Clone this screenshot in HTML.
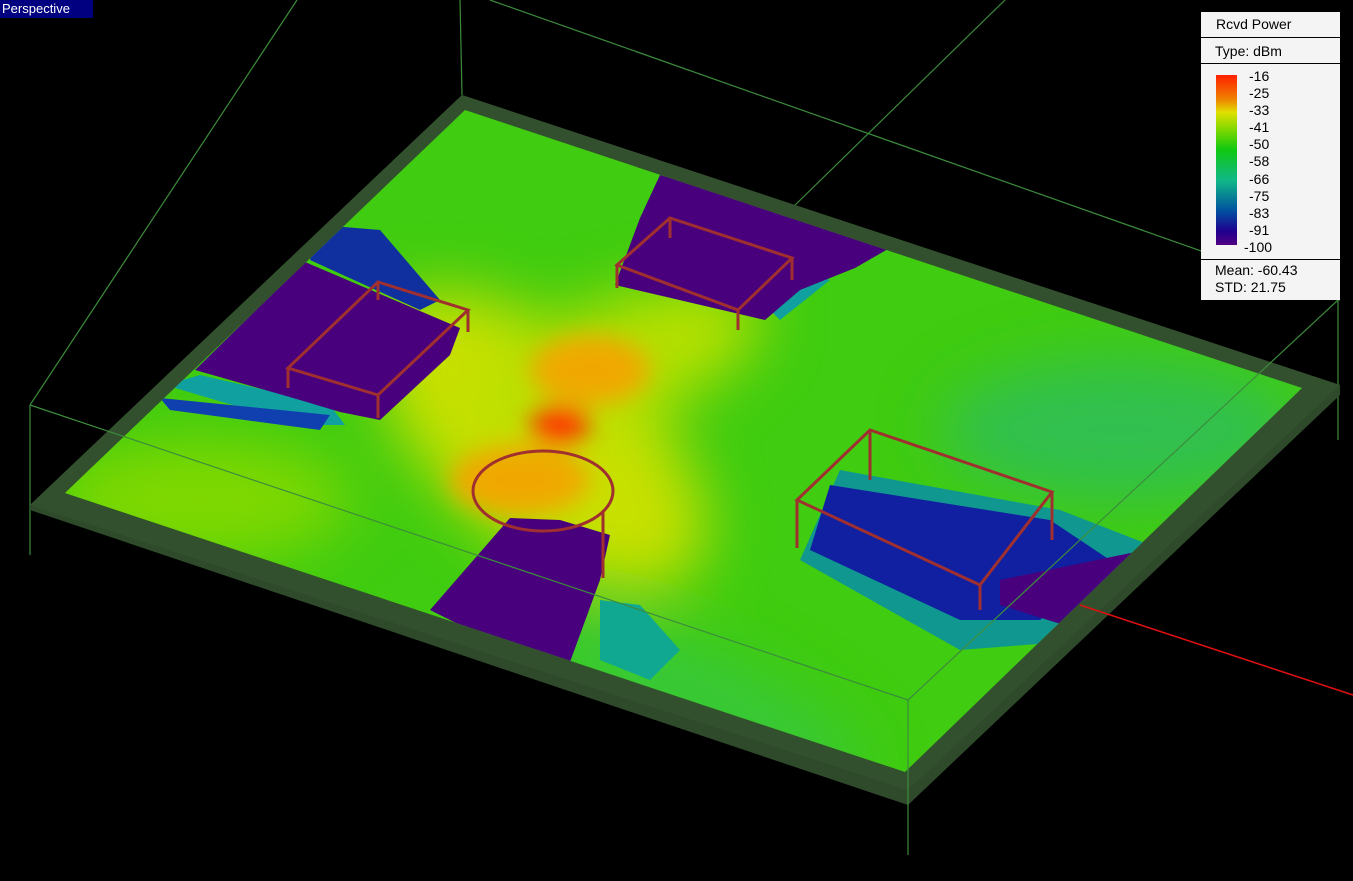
<!DOCTYPE html>
<html><head><style>
html,body{margin:0;padding:0;background:#000;overflow:hidden}
#w{position:relative;width:1353px;height:881px;background:#000}
.lg{position:absolute;left:1201px;top:12px;width:139px;height:288px;background:#f4f4f4;font-family:"Liberation Sans",sans-serif;font-size:14px;color:#000}
.lg .s{border-bottom:1px solid #000;box-sizing:border-box}
.tag{position:absolute;left:0;top:0;width:93px;height:18px;background:#000080;color:#fff;font-family:"Liberation Sans",sans-serif;font-size:13px;line-height:18px;padding-left:2px;box-sizing:border-box}
</style></head><body><div id="w">
<svg width="1353" height="881" style="position:absolute;left:0;top:0">
<defs>
<clipPath id="fl"><polygon points="465,110 1302,388 905,772 65,493"/></clipPath>
<filter id="b1" x="-50%" y="-50%" width="200%" height="200%"><feGaussianBlur stdDeviation="30"/></filter>
<filter id="b2" x="-50%" y="-50%" width="200%" height="200%"><feGaussianBlur stdDeviation="12"/></filter>
</defs>
<g stroke="#3c8c3c" stroke-width="1.2" fill="none">
<line x1="460" y1="0" x2="462" y2="95"/>
<line x1="490" y1="0" x2="1340" y2="300"/>
<line x1="1005" y1="0" x2="790" y2="210"/>
<line x1="30" y1="405" x2="297" y2="0"/>
<line x1="1338" y1="295" x2="1338" y2="440"/>
<line x1="30" y1="405" x2="30" y2="555"/>
</g>
<polygon points="462,95 1340,385 1340,395 908,805 30,510 30,505" fill="#2e4a2a"/>
<polygon points="462,95 1340,385 908,790 30,505" fill="#33502e"/>
<g clip-path="url(#fl)">
<rect x="0" y="0" width="1353" height="881" fill="#40cc10"/>
<g filter="url(#b1)">
<ellipse cx="1120" cy="430" rx="180" ry="70" fill="#30c050"/>
<ellipse cx="700" cy="700" rx="180" ry="50" fill="#38c838" transform="rotate(25 700 700)"/>
<ellipse cx="200" cy="500" rx="150" ry="60" fill="#80d800"/>
<ellipse cx="540" cy="440" rx="200" ry="100" fill="#c8e000" transform="rotate(40 540 440)"/>
<ellipse cx="620" cy="360" rx="150" ry="60" fill="#b8e000" transform="rotate(-20 620 360)"/>
</g>
<g filter="url(#b2)">
<ellipse cx="590" cy="370" rx="60" ry="35" fill="#f0a800"/>
<ellipse cx="520" cy="480" rx="70" ry="35" fill="#f0a800"/>
<ellipse cx="560" cy="425" rx="30" ry="18" fill="#ff3000"/>
</g>
<polygon points="320,225 380,230 440,300 420,310 310,260" fill="#1030a0"/>
<polygon points="165,385 200,375 330,405 345,425 300,425" fill="#10a0a0"/>
<polygon points="160,398 330,415 320,430 170,410" fill="#1040b0"/>
<polygon points="600,600 640,605 680,650 650,680 600,660" fill="#10a890"/>
<polygon points="840,470 1060,510 1150,545 1090,640 960,650 800,560" fill="#109890"/>
<polygon points="830,485 1050,520 1110,560 1040,620 960,620 810,550" fill="#1020a0"/>
<polygon points="750,290 800,270 830,280 780,320" fill="#10a0a0"/>
<g fill="#48007c">
<polygon points="195,370 305,262 460,328 450,355 380,420 340,412 300,400"/>
<polygon points="640,218 660,175 780,210 895,245 855,268 800,290 765,320 615,285"/>
<polygon points="430,610 510,518 560,520 610,535 600,580 570,662 470,630"/>
<polygon points="1000,580 1145,550 1080,630 1000,605"/>
</g>
</g>
<g stroke="#a03030" stroke-width="3" fill="none">
<polygon points="378,282 468,310 378,395 288,368"/>
<line x1="378" y1="282" x2="378" y2="300"/><line x1="468" y1="310" x2="468" y2="332"/><line x1="288" y1="368" x2="288" y2="388"/><line x1="378" y1="395" x2="378" y2="418"/>
<polygon points="670,218 792,258 738,310 617,265"/>
<line x1="670" y1="218" x2="670" y2="238"/><line x1="792" y1="258" x2="792" y2="280"/><line x1="617" y1="265" x2="617" y2="288"/><line x1="738" y1="310" x2="738" y2="330"/>
<polygon points="870,430 1052,492 980,585 797,500"/>
<line x1="870" y1="430" x2="870" y2="480"/><line x1="1052" y1="492" x2="1052" y2="540"/><line x1="797" y1="500" x2="797" y2="548"/><line x1="980" y1="585" x2="980" y2="610"/>
<ellipse cx="543" cy="491" rx="70" ry="40"/>
<line x1="603" y1="512" x2="603" y2="578"/>
</g>
<g stroke="#3c8c3c" stroke-width="1.2" fill="none">
<line x1="30" y1="405" x2="908" y2="700"/>
<line x1="908" y1="700" x2="1338" y2="300"/>
<line x1="908" y1="700" x2="908" y2="855"/>
</g>
<line x1="1080" y1="605" x2="1353" y2="695" stroke="#e01010" stroke-width="1.5"/>
</svg>
<div class="tag">Perspective</div>
<div class="lg">
<div class="s" style="height:26px;line-height:24px;padding-left:15px">Rcvd Power</div>
<div class="s" style="height:26px;line-height:26px;padding-left:14px">Type: dBm</div>
<div class="s" style="height:196px;position:relative">
<div style="position:absolute;left:15px;top:11px;width:21px;height:170px;background:linear-gradient(#ff2000,#f08000 14%,#e0e000 22%,#80d800 32%,#10c810 44%,#10b888 62%,#0050a0 80%,#200090 92%,#500080)"></div>
<div style="position:absolute;left:48px;top:4px;line-height:17.1px;font-size:14px">-16<br>-25<br>-33<br>-41<br>-50<br>-58<br>-66<br>-75<br>-83<br>-91</div>
<div style="position:absolute;left:43px;top:175px;font-size:14px;line-height:17px">-100</div>
</div>
<div style="padding-left:14px;padding-top:2px;line-height:17px">Mean: -60.43<br>STD: 21.75</div>
</div>
</div></body></html>
